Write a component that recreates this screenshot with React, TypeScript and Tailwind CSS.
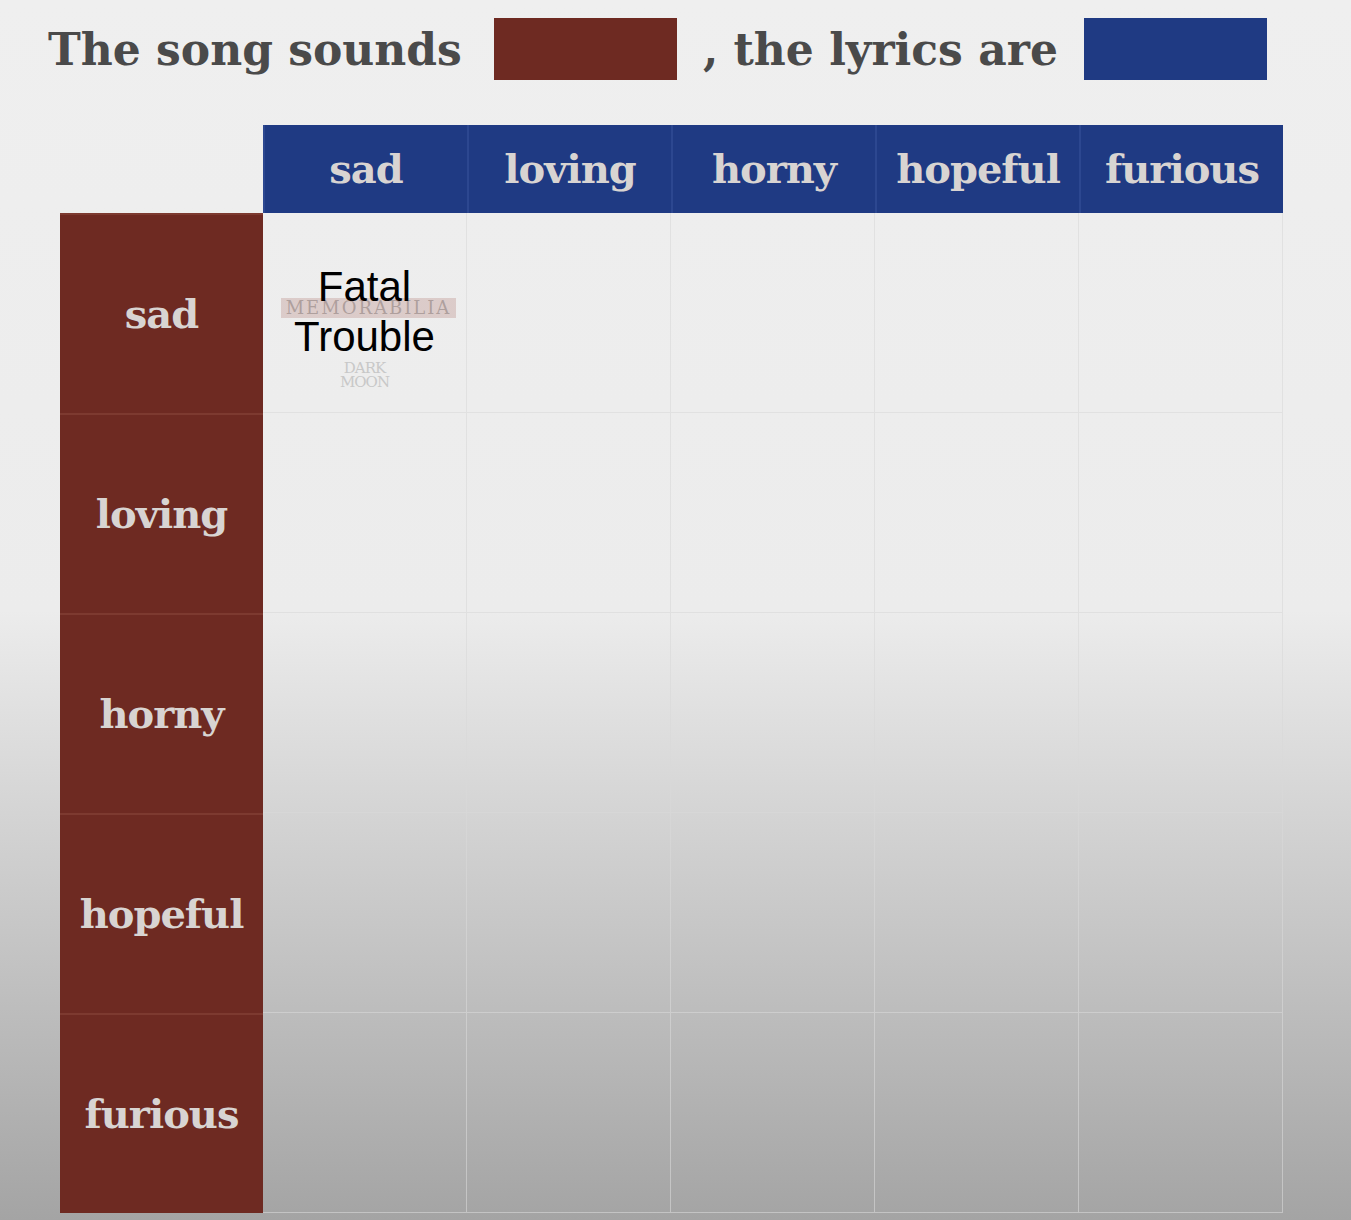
export default function App() {
  const labels = ["sad", "loving", "horny", "hopeful", "furious"];
  const serif = { fontFamily: '"DejaVu Serif", "Liberation Serif", serif' };
  return (
    <div className="w-[1351px] h-[1220px] overflow-hidden bg-[linear-gradient(to_bottom,#efefef_0%,#ececec_50%,#c8c8c8_75%,#a4a4a4_100%)]">
      <div className="flex items-center h-[100px] pl-[48px] text-[44px] font-bold text-[#4a4a4a]" style={serif}>
        <span>The song sounds</span>
        <div className="w-[183px] h-[62px] bg-[#6e2a22] ml-[32px] mt-[-2px]" />
        <span className="ml-[26px]">, the lyrics are</span>
        <div className="w-[183px] h-[62px] bg-[#1f3a83] ml-[26px] mt-[-2px]" />
      </div>
      <div className="ml-[60px] mt-[25px] grid grid-cols-[203px_repeat(5,204px)] grid-rows-[88px_repeat(5,200px)] text-[#d8d4d2] text-[40px] font-bold tracking-[-1px]" style={serif}>
        <div />
        {labels.map((l) => (
          <div key={l} className="bg-[#1f3a83] flex items-center justify-center border-l-2 border-[#2c4790] first:border-l-0">{l}</div>
        ))}
        {labels.map((r, ri) => (
          <>
            <div key={r} className="bg-[#6e2a22] flex items-center justify-center border-t-2 border-[#7d3a30]">{r}</div>
            {labels.map((c, ci) => (
              <div key={r + c} className="border-r border-b border-[#d8d8d8]/60 flex items-center justify-center">
                {ri === 0 && ci === 0 && (
                  <div className="relative flex flex-col items-center w-full h-full justify-center">
                    <div className="absolute top-[85px] left-[18px] right-[10px] h-[20px] bg-[#c9a9a5]/50 text-[18px] text-[#9a8b89]/70 leading-[20px] tracking-[2px] font-normal text-center">MEMORABILIA</div>
                    <div className="absolute top-[148px] text-[15px] leading-[14px] text-[#c8c8c8] font-normal text-center">DARK<br />MOON</div>
                    <div className="relative text-[42px] leading-[50px] text-black font-normal tracking-normal text-center mt-[-2px]" style={{ fontFamily: '"Liberation Sans", Arial, sans-serif' }}>Fatal<br />Trouble</div>
                  </div>
                )}
              </div>
            ))}
          </>
        ))}
      </div>
    </div>
  );
}
